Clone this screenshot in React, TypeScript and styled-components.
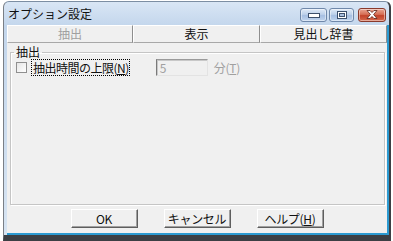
import { createGlobalStyle } from "styled-components";
import styled from "styled-components";

const GlobalStyle = createGlobalStyle`
  html, body {
    margin: 0;
    padding: 0;
    background: #ffffff;
  }
  body {
    font-family: "Noto Sans CJK JP", "Noto Sans", sans-serif;
    font-size: 12px;
    color: #111;
  }
`;

// window chrome
const Window = styled.div`
  margin: 1px 0 0 3px;
  width: 388px;
  height: 240px;
  box-sizing: border-box;
  display: flex;
  flex-direction: column;
  border-top: 1px solid #7c8ea3;
  border-left: 1px solid #7a7f86;
  border-right: 2px solid #3c3f44;
  border-bottom: 6px solid #3c3f44;
  border-radius: 6px 6px 0 0;
  background: linear-gradient(to bottom, #d9e6f5 0px, #c3d6ec 24px, #d7e4f2 100%);
`;

const TitleBar = styled.div`
  height: 23px;
  flex-shrink: 0;
  display: flex;
  align-items: center;
  justify-content: space-between;
  padding: 0 3px 0 4px;
`;

const Title = styled.span`
  font-size: 12px;
  line-height: 14px;
  color: #111;
`;

const Controls = styled.div`
  display: flex;
  align-items: center;
  gap: 2px;
  margin-top: 2px;
`;

const CtlButton = styled.div<{ $w: number; $close?: boolean }>`
  width: ${(p) => p.$w}px;
  height: 14px;
  box-sizing: border-box;
  border: 1px solid ${(p) => (p.$close ? "#8a3a2c" : "#6f88aa")};
  border-radius: 3px;
  display: flex;
  align-items: center;
  justify-content: center;
  margin-left: ${(p) => (p.$close ? 2 : 0)}px;
  background: ${(p) =>
    p.$close
      ? "linear-gradient(to bottom, #e9a693 0%, #d66f55 45%, #c2432a 55%, #d66a4d 100%)"
      : "linear-gradient(to bottom, #dfeaf7 0%, #bcd0ea 45%, #a6bfe2 55%, #c1d5ee 100%)"};
  box-shadow: inset 0 0 0 1px rgba(255, 255, 255, 0.45);
`;

const Client = styled.div`
  flex: 1;
  margin-left: 3px;
  display: flex;
  flex-direction: column;
  background: #f0f0f0;
  border-right: 2px solid #2c9ad1;
  border-bottom: 2px solid #2c9ad1;
`;

// tab buttons
const TabRow = styled.div`
  display: grid;
  grid-template-columns: 126px 127px 127px;
  height: 18px;
  flex-shrink: 0;
`;

const Tab = styled.div<{ $disabled?: boolean }>`
  box-sizing: border-box;
  display: flex;
  align-items: center;
  justify-content: center;
  background: #f0f0f0;
  border-top: 1px solid #ffffff;
  border-left: 1px solid #ffffff;
  border-right: 1px solid #8e8e8e;
  border-bottom: 1px solid #a8a8a8;
  color: ${(p) => (p.$disabled ? "#a0a0a0" : "#111")};
  font-size: 12px;
  line-height: 14px;
`;

// group box
const Group = styled.fieldset`
  flex: 1;
  margin: 1px 2px 0 3px;
  padding: 0;
  min-width: 0;
  border: 1px solid #c5c5c5;
  box-shadow: inset 1px 1px 0 #ffffff, 1px 1px 0 #ffffff;
`;

const Legend = styled.legend`
  margin-left: 3px;
  padding: 0 2px;
  font-size: 12px;
  line-height: 16px;
  color: #111;
`;

const OptionRow = styled.div`
  display: flex;
  align-items: center;
  height: 19px;
  margin-top: -2px;
  padding-left: 5px;
`;

const CheckBox = styled.span`
  width: 11px;
  height: 11px;
  box-sizing: border-box;
  border: 1px solid #8f8f8f;
  background: linear-gradient(135deg, #e6e6e6 0%, #ffffff 100%);
  flex-shrink: 0;
`;

const FocusLabel = styled.span`
  margin-left: 4px;
  padding: 1px 0 0 1px;
  border: 1px dotted #000;
  line-height: 14px;
  letter-spacing: -0.5px;
  color: #111;
  white-space: nowrap;
`;

const NumberInput = styled.div`
  margin-left: 26px;
  width: 52px;
  height: 17px;
  box-sizing: border-box;
  border-top: 1px solid #9a9a9a;
  border-left: 1px solid #7a7a7a;
  border-right: 1px solid #e3e3e3;
  border-bottom: 1px solid #e3e3e3;
  box-shadow: inset 1px 1px 0 #c8c8c8;
  background: #f0f0f0;
  color: #a0a0a0;
  padding-left: 3px;
  line-height: 15px;
`;

const UnitLabel = styled.span`
  margin-left: 6px;
  color: #a0a0a0;
  letter-spacing: -0.3px;
  white-space: nowrap;
`;

// bottom buttons
const ButtonRow = styled.div`
  flex-shrink: 0;
  display: flex;
  justify-content: center;
  gap: 26px;
  padding: 4px 0 5px;
`;

const Button = styled.div`
  width: 67px;
  height: 19px;
  box-sizing: border-box;
  display: flex;
  align-items: center;
  justify-content: center;
  background: #f0f0f0;
  border-top: 1px solid #ffffff;
  border-left: 1px solid #ffffff;
  border-right: 1px solid #5e5e5e;
  border-bottom: 1px solid #5e5e5e;
  box-shadow: inset -1px -1px 0 #a0a0a0;
  font-size: 12px;
  line-height: 14px;
  letter-spacing: -0.3px;
  color: #111;
`;

const U = styled.span`
  text-decoration: underline;
`;

const MinGlyph = () => (
  <svg width="12" height="6" viewBox="0 0 12 6">
    <rect x="0.5" y="1.5" width="11" height="4" fill="#fff" stroke="#3c4f6b" />
  </svg>
);

const MaxGlyph = () => (
  <svg width="10" height="8" viewBox="0 0 10 8">
    <rect x="0.5" y="0.5" width="9" height="7" fill="#fff" stroke="#3c4f6b" />
    <rect x="2.5" y="2.5" width="5" height="3" fill="#a9c0e0" stroke="#3c4f6b" />
  </svg>
);

const CloseGlyph = () => (
  <svg width="12" height="9" viewBox="0 0 12 9">
    <path
      d="M1 0.5 L4 0.5 L6 2.5 L8 0.5 L11 0.5 L7.6 4.5 L11 8.5 L8 8.5 L6 6.5 L4 8.5 L1 8.5 L4.4 4.5 Z"
      fill="#fff"
      stroke="#5a1f14"
      strokeWidth="0.8"
    />
  </svg>
);

export default function App() {
  return (
    <>
      <GlobalStyle />
      <Window>
        <TitleBar>
          <Title>オプション設定</Title>
          <Controls>
            <CtlButton $w={27}>
              <MinGlyph />
            </CtlButton>
            <CtlButton $w={25}>
              <MaxGlyph />
            </CtlButton>
            <CtlButton $w={28} $close>
              <CloseGlyph />
            </CtlButton>
          </Controls>
        </TitleBar>

        <Client>
          <TabRow>
            <Tab $disabled>抽出</Tab>
            <Tab>表示</Tab>
            <Tab>見出し辞書</Tab>
          </TabRow>

          <Group>
            <Legend>抽出</Legend>
            <OptionRow>
              <CheckBox />
              <FocusLabel>
                抽出時間の上限(<U>N</U>)
              </FocusLabel>
              <NumberInput>5</NumberInput>
              <UnitLabel>
                分(<U>T</U>)
              </UnitLabel>
            </OptionRow>
          </Group>

          <ButtonRow>
            <Button>OK</Button>
            <Button>キャンセル</Button>
            <Button>
              ヘルプ(<U>H</U>)
            </Button>
          </ButtonRow>
        </Client>
      </Window>
    </>
  );
}
